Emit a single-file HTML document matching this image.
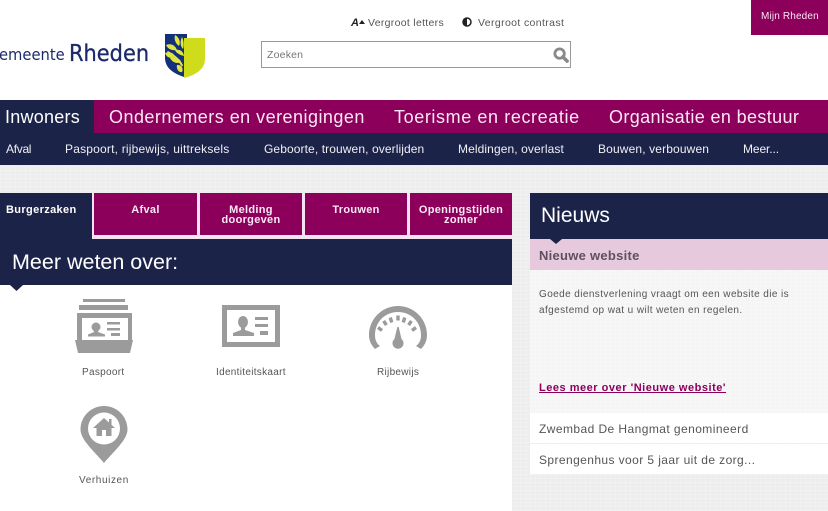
<!DOCTYPE html>
<html><head><meta charset="utf-8"><style>
html,body{margin:0;padding:0}
body{width:828px;height:511px;position:relative;overflow:hidden;background:#fff;font-family:"Liberation Sans",Arial,sans-serif}
.a{position:absolute;white-space:nowrap}
.b{position:absolute}
.m{top:107px;font-size:18px;line-height:21px;color:#fbe6f3;letter-spacing:.4px}
.s{top:142px;font-size:12px;line-height:15px;color:#f0f0f4;letter-spacing:.2px}
.t{position:absolute;top:193px;height:42px;background:#8c005c;color:#fde8f5;font-weight:bold;font-size:11px;line-height:10px;text-align:center;letter-spacing:.3px}
.t span{display:block;padding-top:12px}
.l{font-size:10px;line-height:13px;color:#555;letter-spacing:.3px}
</style></head><body>
<div class="b" style="left:0;top:165px;width:828px;height:346px;background-color:#ededed;background-image:repeating-linear-gradient(0deg,rgba(255,255,255,.22) 0 1px,transparent 1px 4px),repeating-linear-gradient(90deg,rgba(255,255,255,.18) 0 1px,transparent 1px 5px)"></div>

<!-- header -->
<div class="a" style="left:-1px;top:44px;font-size:16px;line-height:22px;color:#1c2a6b;font-family:'DejaVu Sans',sans-serif;transform-origin:0 0;transform:scale(.92,1)">emeente</div>
<div class="a" style="left:69px;top:40px;font-size:23px;line-height:28px;color:#1c2a6b;font-family:'DejaVu Sans',sans-serif;-webkit-text-stroke:.3px #1c2a6b;transform-origin:0 0;transform:scale(.91,1)">Rheden</div>
<svg class="b" style="left:164px;top:33px" width="42" height="46" viewBox="0 0 42 46">
<path d="M1 1H23V5H20V44C12 41 2 37 1 26Z" fill="#13307c"/>
<path d="M20 5H41V26C41 36 32 42 20 45Z" fill="#cfdc1c"/>
<g fill="#e3e63a"><path d="M18 34C15 29 10 24 3 19L4 18C11 22 16 26 19 32Z"/><path d="M13 17C8 18 4 16 2 12 7 10 11 12 13 17Z"/><path d="M15 13C11 10 10 6 11 2 15 4 17 9 15 13Z"/><path d="M19 16C16 13 16 8 18 4 20 8 20 13 19 16Z"/><path d="M11 24C7 26 3 25 1 20 6 18 10 20 11 24Z"/><path d="M20 23C16 22 12 20 11 17 16 16 19 18 20 23Z"/><path d="M17 29C13 31 9 30 6 25 11 24 16 25 17 29Z"/><path d="M13 32C17 31 20 36 18 39 15 40 12 36 13 32Z"/></g>
</svg>

<div class="a" style="left:351px;top:17px;font-size:11px;font-weight:bold;font-style:italic;line-height:13px;color:#222">A</div>
<svg class="b" style="left:359px;top:20px" width="6" height="4"><path d="M0 4L3 0 6 4Z" fill="#222"/></svg>
<div class="a" style="left:368px;top:17px;font-size:10.5px;line-height:13px;color:#555;letter-spacing:.3px">Vergroot letters</div>
<svg class="b" style="left:462px;top:17px" width="10" height="10" viewBox="0 0 10 10"><circle cx="5" cy="5" r="4" fill="#fff" stroke="#222" stroke-width="1.5"/><path d="M5 1A4 4 0 0 0 5 9Z" fill="#222"/></svg>
<div class="a" style="left:478px;top:17px;font-size:10.5px;line-height:13px;color:#555;letter-spacing:.37px">Vergroot contrast</div>
<div class="b" style="left:261px;top:41px;width:308px;height:25px;border:1px solid #999;background:#fff"></div>
<div class="a" style="left:267px;top:49px;font-size:10.5px;line-height:13px;color:#777;letter-spacing:.2px">Zoeken</div>
<svg class="b" style="left:553px;top:47px" width="16" height="16" viewBox="0 0 17 17"><circle cx="7" cy="7" r="5" fill="none" stroke="#8a8a8a" stroke-width="3"/><path d="M10.500 10.500L15 15" stroke="#8a8a8a" stroke-width="3.800" stroke-linecap="round"/></svg>
<div class="b" style="left:751px;top:0;width:77px;height:35px;background:#8c005c"></div>
<div class="a" style="left:761px;top:10px;font-size:10px;line-height:13px;color:#fbe6f3;letter-spacing:.15px">Mijn Rheden</div>

<!-- main nav -->
<div class="b" style="left:0;top:100px;width:828px;height:33px;background:#8c005c"></div>
<div class="b" style="left:0;top:100px;width:94px;height:33px;background:#1c2349"></div>
<div class="b" style="left:0;top:133px;width:828px;height:32px;background:#1c2349"></div>
<div class="a m" style="left:5px;color:#fff;letter-spacing:.25px">Inwoners</div>
<div class="a m" style="left:109px;letter-spacing:.47px">Ondernemers en verenigingen</div>
<div class="a m" style="left:394px;letter-spacing:.6px">Toerisme en recreatie</div>
<div class="a m" style="left:609px;letter-spacing:.37px">Organisatie en bestuur</div>
<div class="a s" style="left:6px;letter-spacing:-.3px">Afval</div>
<div class="a s" style="left:65px">Paspoort, rijbewijs, uittreksels</div>
<div class="a s" style="left:264px;letter-spacing:.1px">Geboorte, trouwen, overlijden</div>
<div class="a s" style="left:458px;letter-spacing:.1px">Meldingen, overlast</div>
<div class="a s" style="left:598px;letter-spacing:.14px">Bouwen, verbouwen</div>
<div class="a s" style="left:743px;letter-spacing:-.1px">Meer...</div>

<!-- left block -->
<div class="b" style="left:0;top:193px;width:512px;height:46px;background:#f6e3f0"></div>
<div class="b" style="left:0;top:193px;width:92px;height:46px;background:#1c2349"></div>
<div class="a" style="left:6px;top:204px;font-size:11px;font-weight:bold;line-height:12px;color:#fff;letter-spacing:.36px">Burgerzaken</div>
<div class="t" style="left:94px;width:103px"><span>Afval</span></div>
<div class="t" style="left:200px;width:102px"><span>Melding<br>doorgeven</span></div>
<div class="t" style="left:305px;width:102px"><span>Trouwen</span></div>
<div class="t" style="left:410px;width:102px"><span>Openingstijden<br>zomer</span></div>
<div class="b" style="left:0;top:239px;width:512px;height:46px;background:#1c2349"></div>
<div class="a" style="left:12px;top:249px;font-size:21.5px;line-height:26px;color:#fff">Meer weten over:</div>
<div class="b" style="left:0;top:285px;width:512px;height:226px;background:#fff"></div>
<svg class="b" style="left:10px;top:285px" width="13" height="6"><path d="M0 0H13L6.500 6Z" fill="#1c2349"/></svg>

<!-- icons -->
<svg class="b" style="left:74px;top:297px" width="60" height="58" viewBox="0 0 60 58" fill="#9b9b9b">
<rect x="9" y="2" width="42" height="3"/><rect x="5" y="8" width="49" height="5"/>
<path d="M3 16H58V43H54V21H8V43H3Z"/>
<path d="M1 43H59L56 56H4Z"/>
<circle cx="22" cy="30" r="4.500"/><path d="M20 33H24V35L31 37.500V39.500H14V37.500L20 35Z"/>
<rect x="33" y="25" width="13" height="2.500"/><rect x="33" y="31" width="13" height="2.500"/><rect x="37" y="36" width="9" height="3"/>
</svg>
<svg class="b" style="left:222px;top:304px" width="58" height="44" viewBox="0 0 58 44" fill="#9b9b9b">
<path fill-rule="evenodd" d="M0 1H58V43H0ZM5 6V38H53V6Z"/>
<ellipse cx="21" cy="18" rx="5" ry="6"/><path d="M19 23H23V26L32 29V32H11V29L19 26Z"/>
<rect x="33" y="13" width="13" height="3"/><rect x="33" y="20" width="13" height="3"/><rect x="38" y="27" width="8" height="4"/>
</svg>
<svg class="b" style="left:368px;top:306px" width="60" height="48" viewBox="0 0 60 48" fill="#9b9b9b">
<path d="M7 43C2 38 1 33 1 29 1 13 14 0 30 0S59 13 59 29C59 33 58 38 53 43L48 40C52 37 53 33 53 29 53 16 43 6 30 6S7 16 7 29C7 33 8 37 12 40Z"/>
<g stroke="#9b9b9b" stroke-width="3.400"><path d="M14 24.500L10 21.500"/><path d="M18.400 19.100L15.600 14.900"/><path d="M23.800 16.400L22.200 11.600"/><path d="M30 14.500V9.500"/><path d="M35.200 16.400L36.800 11.600"/><path d="M40.600 19.100L43.400 14.900"/><path d="M44 24.500L48 21.500"/></g>
<path d="M29.300 21H30.700L33.500 33A5.500 5.500 0 1 1 26.500 33Z"/>
</svg>
<svg class="b" style="left:80px;top:406px" width="48" height="58" viewBox="0 0 48 58" fill="#9b9b9b">
<path fill-rule="evenodd" d="M24 0C37 0 47.500 10.500 47.500 23.500 47.500 34 33 46 24 57 15 46 .5 34 .5 23.500 .5 10.500 11 0 24 0ZM24 6.500A16 16 0 1 0 24 38.500 16 16 0 1 0 24 6.500Z"/>
<path fill-rule="evenodd" d="M24 12L35 22H31.500V30H16.500V22H13ZM22 24V30H26V24Z"/><rect x="29" y="13" width="2.500" height="6"/>
</svg>
<div class="a l" style="left:82px;top:366px">Paspoort</div>
<div class="a l" style="left:216px;top:366px">Identiteitskaart</div>
<div class="a l" style="left:377px;top:366px">Rijbewijs</div>
<div class="a l" style="left:79px;top:474px;letter-spacing:.6px">Verhuizen</div>

<!-- right block -->
<div class="b" style="left:530px;top:193px;width:298px;height:46px;background:#1c2349"></div>
<div class="a" style="left:541px;top:202px;font-size:21px;line-height:27px;color:#fff">Nieuws</div>
<div class="b" style="left:530px;top:239px;width:298px;height:31px;background:#e6c9dd"></div>
<svg class="b" style="left:550px;top:239px" width="12" height="5"><path d="M0 0H12L6 5Z" fill="#1c2349"/></svg>
<div class="a" style="left:539px;top:248px;font-size:13px;font-weight:bold;line-height:15px;color:#5f5060;letter-spacing:.27px">Nieuwe website</div>
<div class="b" style="left:530px;top:270px;width:298px;height:143px;background:rgba(255,255,255,.45)"></div>
<div class="a" style="left:539px;top:287px;font-size:10px;line-height:16px;color:#555;letter-spacing:.41px">Goede dienstverlening vraagt om een website die is<br>afgestemd op wat u wilt weten en regelen.</div>
<div class="a" style="left:539px;top:381px;font-size:11px;font-weight:bold;line-height:14px;color:#8c005c;text-decoration:underline;letter-spacing:.52px">Lees meer over 'Nieuwe website'</div>
<div class="b" style="left:530px;top:413px;width:298px;height:30px;background:#fff"></div>
<div class="b" style="left:530px;top:444px;width:298px;height:30px;background:#fff"></div>
<div class="a" style="left:539px;top:422px;font-size:12px;line-height:15px;color:#555;letter-spacing:.43px">Zwembad De Hangmat genomineerd</div>
<div class="a" style="left:539px;top:453px;font-size:12px;line-height:15px;color:#555;letter-spacing:.41px">Sprengenhus voor 5 jaar uit de zorg...</div>
</body></html>
